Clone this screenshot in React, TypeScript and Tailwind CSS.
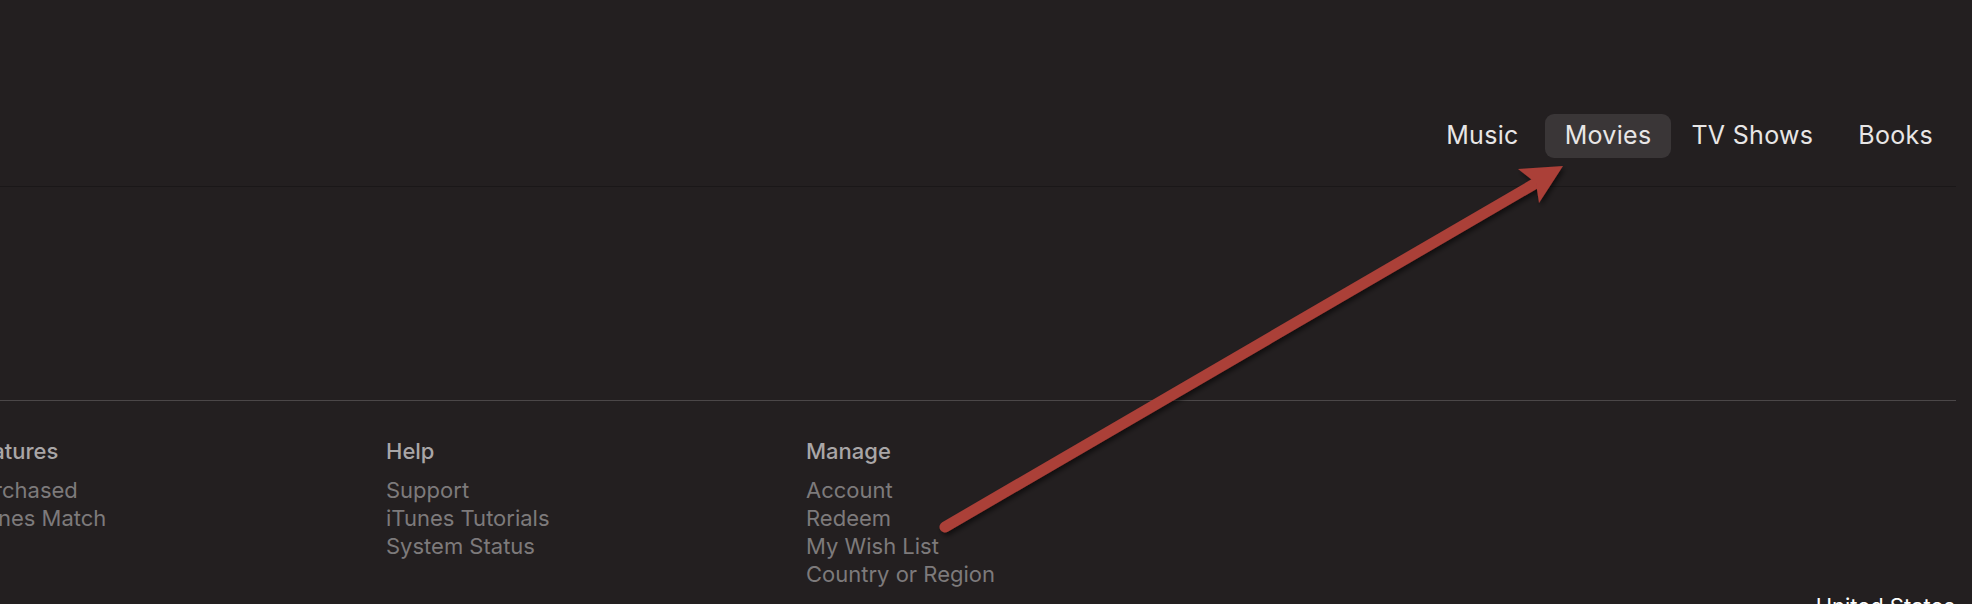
import React from 'react';

const nav = [
  { label: 'Music', cls: 'mr-[6px]' },
  { label: 'Movies', cls: 'bg-[#3a3637]' },
  { label: 'TV Shows', cls: '' },
  { label: 'Books', cls: 'ml-[5px]' },
];

const columns = [
  { title: 'Features', links: ['Purchased', 'iTunes Match'], width: 'w-[419px]' },
  { title: 'Help', links: ['Support', 'iTunes Tutorials', 'System Status'], width: 'w-[420px]' },
  { title: 'Manage', links: ['Account', 'Redeem', 'My Wish List', 'Country or Region'], width: 'w-[420px]' },
];

function Arrow() {
  return (
    <svg className="absolute inset-0 pointer-events-none" width="1972" height="604" viewBox="0 0 1972 604">
      <defs>
        <filter id="shadow" x="-10%" y="-10%" width="120%" height="120%">
          <feDropShadow dx="2" dy="3" stdDeviation="2.5" floodColor="#000" floodOpacity="0.55" />
        </filter>
      </defs>
      <g filter="url(#shadow)">
        <line x1="945" y1="527" x2="1536" y2="183" stroke="#ab3f38" strokeWidth="11" strokeLinecap="round" />
        <polygon points="1563,166 1518,169 1536,183 1539,203" fill="#ab3f38" />
      </g>
    </svg>
  );
}

export default function App() {
  return (
    <div className="relative w-full h-[604px] overflow-hidden bg-[#231f20]" style={{ fontFamily: 'Inter, "Noto Sans", sans-serif' }}>
      <header className="h-[186px] flex items-end justify-end pr-[19px] pb-[28px]">
        <nav className="flex items-center">
          {nav.map((item) => (
            <a
              key={item.label}
              className={
                'h-[44px] flex items-center px-[20px] rounded-[9px] text-[25px] tracking-[0.3px] text-[#e8e6e6] ' + item.cls
              }
            >
              {item.label}
            </a>
          ))}
        </nav>
      </header>
      <div className="h-px w-[1956px] bg-[#1a1718]" />

      <main className="h-[213px]" />

      <footer className="w-[1956px] border-t border-[#4b4748]">
        <div className="flex ml-[-33px] pt-[36px]">
          {columns.map((col) => (
            <div key={col.title} className={col.width}>
              <h3 className="text-[22px] leading-[28px] font-medium text-[#a9a6a7]">{col.title}</h3>
              <ul className="mt-[11px]">
                {col.links.map((l) => (
                  <li key={l} className="text-[22px] leading-[28px] text-[#7d7a7b]">
                    {l}
                  </li>
                ))}
              </ul>
            </div>
          ))}
        </div>
        <div className="flex justify-end pr-[1px] mt-[4px]">
          <span className="text-[22px] leading-[28px] text-white">United States</span>
        </div>
      </footer>

      <Arrow />
    </div>
  );
}
